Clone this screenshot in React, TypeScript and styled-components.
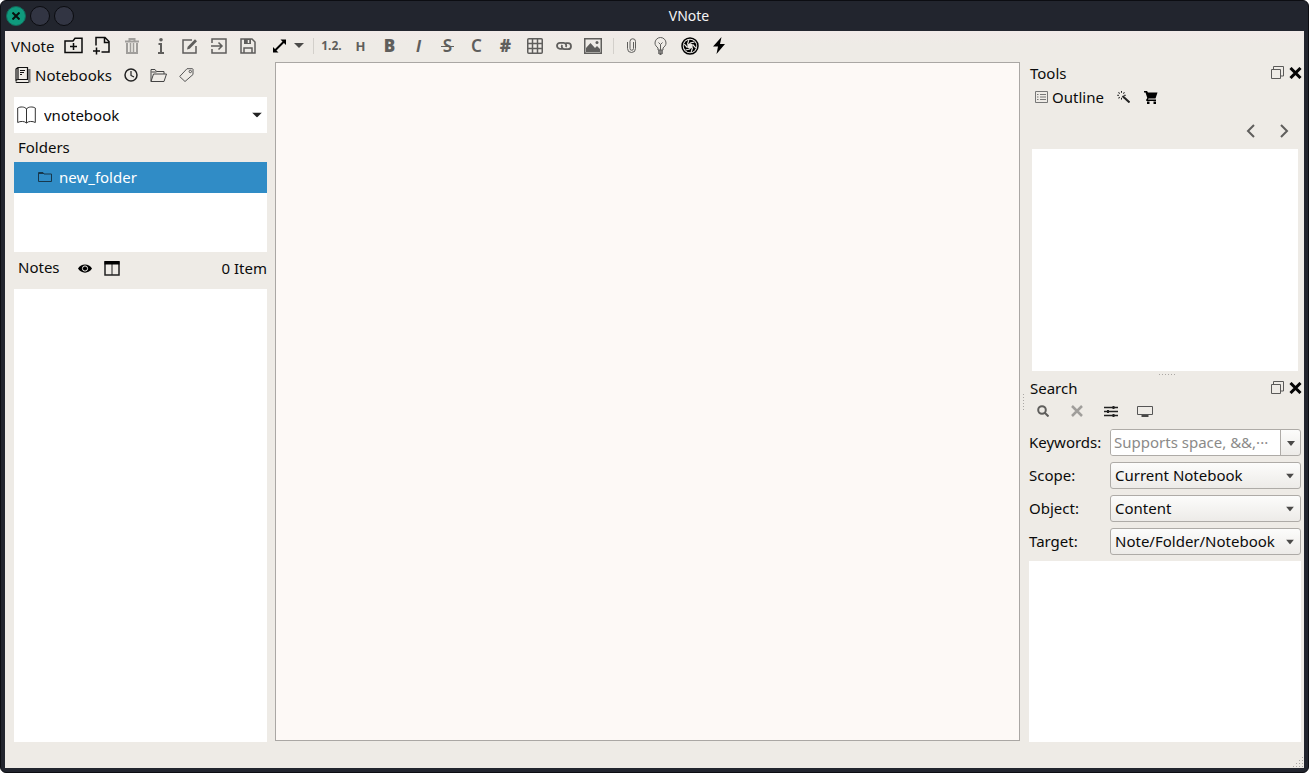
import React from "react";
import styled, { createGlobalStyle, css } from "styled-components";

const ink = "#0b0b0b";
const grey = "#5f5e5c";
const panel = "#eeebe6";

const GlobalStyle = createGlobalStyle`
  * { box-sizing: border-box; }
  body { margin: 0; background: #fff; }
  body, button, input, select {
    font-family: "Noto Sans", "Noto Sans CJK SC", sans-serif;
    font-size: 15px;
    line-height: 20px;
    color: ${ink};
  }
  button { border: 0; padding: 0; background: none; }
  svg { display: block; flex: none; }
`;

const Window = styled.div`
  display: flex;
  flex-direction: column;
  height: 100vh;
  min-height: 560px;
  padding: 0 4px 4px;
  border: 1px solid #0c0d12;
  border-radius: 6px;
  background: #22252e;
`;

const TitleBar = styled.header`
  display: flex;
  align-items: center;
  height: 30px;
  flex: none;
`;

const WindowButtons = styled.div`
  display: flex;
  gap: 4px;
  padding-left: 1px;
`;

const RoundButton = styled.button<{ $close?: boolean }>`
  display: grid;
  place-items: center;
  width: 20px;
  height: 20px;
  border-radius: 50%;
  border: 1px solid ${(p) => (p.$close ? "#12695a" : "#0b0c10")};
  background: ${(p) => (p.$close ? "#0f9a7d" : "#323543")};
`;

const WindowTitle = styled.h1`
  flex: 1;
  margin: 0;
  font-size: 14px;
  font-weight: 400;
  text-align: center;
  color: #f4f4f5;
`;

const Content = styled.div`
  display: flex;
  flex-direction: column;
  flex: 1;
  min-height: 0;
  background: ${panel};
`;

const Toolbar = styled.div`
  display: flex;
  align-items: center;
  height: 31px;
  flex: none;
  padding: 0 0 2px 6px;
  background: linear-gradient(#f1eae8, ${panel} 40%);
`;

const AppName = styled.span`
  width: 48px;
`;

const ToolButton = styled.button<{ $dim?: boolean; $dark?: boolean }>`
  display: grid;
  place-items: center;
  width: 29px;
  height: 28px;
  color: ${(p) => (p.$dim ? "#a09e9b" : p.$dark ? ink : grey)};
`;

const MenuToolButton = styled.button`
  display: flex;
  align-items: center;
  gap: 7px;
  width: 45px;
  height: 28px;
  padding-left: 10px;
`;

const Separator = styled.span`
  width: 1px;
  height: 16px;
  margin: 0 3px 0 6px;
  background: #d3d0cb;
`;

const Mark = styled.span<{ $size: number; $weight?: number; $italic?: boolean; $strike?: boolean }>`
  position: relative;
  font-family: ${(p) => (p.$italic ? '"Open Sans", sans-serif' : "inherit")};
  font-size: ${(p) => p.$size}px;
  font-weight: ${(p) => p.$weight ?? 700};
  font-style: ${(p) => (p.$italic ? "italic" : "normal")};
  ${(p) =>
    p.$strike &&
    css`
      &::after {
        content: "";
        position: absolute;
        left: -2px;
        right: -2px;
        top: 10px;
        height: 1px;
        background: currentColor;
      }
    `}
`;

const Main = styled.main`
  display: flex;
  flex: 1;
  min-height: 0;
`;

const SidePanel = styled.aside`
  display: flex;
  flex-direction: column;
  flex: none;
  width: 262px;
  padding-left: 9px;
`;

const TabRow = styled.nav<{ $height: number; $indent: number; $gap: number }>`
  display: flex;
  align-items: center;
  gap: ${(p) => p.$gap}px;
  height: ${(p) => p.$height}px;
  flex: none;
  padding-left: ${(p) => p.$indent}px;
`;

const Tab = styled.button`
  display: flex;
  align-items: center;
  gap: 4px;
`;

const NotebookBox = styled.div`
  position: relative;
  display: flex;
  align-items: center;
  height: 36px;
  flex: none;
  margin-top: 10px;
  padding-left: 3px;
  background: #fff;
`;

const NotebookSelect = styled.select`
  flex: 1;
  height: 36px;
  padding: 0 24px 0 8px;
  border: 0;
  appearance: none;
  background: transparent;
`;

const SelectArrow = styled.span<{ $right: number }>`
  position: absolute;
  right: ${(p) => p.$right}px;
  top: 50%;
  transform: translateY(-50%);
  pointer-events: none;
`;

const SectionTitle = styled.h2<{ $height: number }>`
  display: flex;
  align-items: center;
  height: ${(p) => p.$height}px;
  margin: 0;
  padding: 0 0 2px 4px;
  font-size: 15px;
  font-weight: 400;
`;

const Tree = styled.ul`
  flex: none;
  height: 90px;
  margin: 0;
  padding: 0;
  list-style: none;
  background: #fff;
`;

const TreeRow = styled.button`
  display: flex;
  align-items: center;
  gap: 7px;
  width: 100%;
  height: 31px;
  padding: 0 0 2px 24px;
  background: #308cc6;
  color: #fff;
`;

const NotesHeader = styled.div`
  display: flex;
  align-items: center;
  height: 32px;
  flex: none;
  margin-bottom: 5px;
`;

const NotesTools = styled.div`
  display: flex;
  flex: 1;
  gap: 12px;
  padding-left: 18px;
`;

const Pane = styled.section<{ $grow: number; $inset?: boolean }>`
  flex: ${(p) => p.$grow} 1 0;
  min-height: 0;
  margin: ${(p) => (p.$inset ? "0 6px 0 3px" : "0")};
  background: #fff;
`;

const Editor = styled.section`
  flex: 1;
  min-width: 0;
  margin: 0 0 1px 8px;
  border: 1px solid #aaa7a4;
  background: #fdf9f6;
`;

const VerticalGrip = styled.div`
  display: grid;
  place-items: center;
  width: 9px;
  padding-right: 2px;
  flex: none;
`;

const HorizontalGrip = styled.div`
  display: grid;
  place-items: center;
  height: 6px;
  flex: none;
`;

const DockColumn = styled.aside`
  display: flex;
  flex-direction: column;
  flex: none;
  width: 275px;
`;

const DockTitle = styled.div`
  display: flex;
  align-items: center;
  height: 23px;
  flex: none;
  padding: 0 2px 2px 1px;
`;

const DockName = styled.h2`
  flex: 1;
  margin: 0;
  font-size: 15px;
  font-weight: 400;
`;

const DockButtons = styled.div`
  display: flex;
  gap: 5px;
`;

const HistoryRow = styled.div`
  display: flex;
  justify-content: flex-end;
  align-items: center;
  height: 40px;
  flex: none;
  gap: 18px;
  padding: 4px 12px 0 0;
`;

const IconButton = styled.button<{ $width: number; $dim?: boolean }>`
  display: grid;
  place-items: center;
  width: ${(p) => p.$width}px;
  height: 20px;
  color: ${(p) => (p.$dim ? "#a09e9b" : grey)};
`;

const SearchTools = styled.div`
  display: flex;
  align-items: center;
  gap: 14px;
  height: 22px;
  flex: none;
  padding-left: 4px;
`;

const SearchForm = styled.form`
  display: grid;
  grid-template-columns: 81px 1fr;
  grid-auto-rows: 27px;
  row-gap: 6px;
  align-items: center;
  flex: none;
  padding: 7px 3px 6px 0;
`;

const FieldLabel = styled.label`
  padding-bottom: 2px;
`;

const Field = styled.div`
  position: relative;
  display: flex;
  height: 27px;
  border: 1px solid #aeaba7;
  border-radius: 3px;
  background: linear-gradient(#fcfcfb, #edebe8);
  overflow: hidden;
`;

const KeywordInput = styled.input`
  flex: 1;
  min-width: 0;
  padding: 0 0 2px 3px;
  border: 0;
  border-right: 1px solid #aeaba7;
  background: #fff;
  &::placeholder { color: #8b8a89; opacity: 1; }
`;

const FieldButton = styled.button`
  display: grid;
  place-items: center;
  width: 19px;
  padding-top: 1px;
`;

const FieldSelect = styled.select`
  flex: 1;
  min-width: 0;
  padding: 0 20px 2px 4px;
  border: 0;
  appearance: none;
  background: transparent;
`;

const SearchResults = styled.section`
  flex: 181 1 0;
  min-height: 0;
  margin-right: 3px;
  background: #fff;
`;

const StatusBar = styled.footer`
  display: flex;
  justify-content: flex-end;
  align-items: flex-end;
  height: 26px;
  flex: none;
  padding: 0 1px 1px 0;
`;

type IconProps = { w: number; h: number; sw?: number; color?: string; children: React.ReactNode };

function Icon({ w, h, sw = 1, color = "currentColor", children }: IconProps) {
  return (
    <svg width={w} height={h} viewBox={`0 0 ${w} ${h}`} fill="none" stroke={color} strokeWidth={sw} aria-hidden="true">
      {children}
    </svg>
  );
}

const Arrow = ({ w = 8, color = "#4b4a49" }: { w?: number; color?: string }) => (
  <Icon w={w} h={5}>
    <path d={`M0 0H${w}L${w / 2} 5Z`} fill={color} stroke="none" />
  </Icon>
);

const FloatIcon = () => (
  <Icon w={13} h={13} color="#5b5a59">
    <path d="M.5 3.5h9v9h-9zM2.5 3.5v-3h10v9.500h-3" />
  </Icon>
);

const CloseIcon = () => (
  <Icon w={13} h={12} sw={3} color="#050505">
    <path d="M1.5 1l10 10M11.5 1l-10 10" />
  </Icon>
);

const bladeAngles = [0, 60, 120, 180, 240, 300];
const rayAngles = [0, 45, 90, 135, 180, 225, 270, 315];

function MainToolbar() {
  return (
    <Toolbar role="toolbar" aria-label="Main">
      <AppName>VNote</AppName>
      <ToolButton $dark aria-label="New folder">
        <Icon w={19} h={17} sw={1.5}>
          <path d="M1 4h8l2-2.700h7V15.500H1zM9.500 6v7M6 9.500h7" />
        </Icon>
      </ToolButton>
      <ToolButton $dark aria-label="New note">
        <Icon w={19} h={19} sw={1.5}>
          <path d="M3 9.500V1.500h9l4 4v10.500H8.500M11.500 1.500v5h4.500M3.500 11.500v7M0 15h7" />
        </Icon>
      </ToolButton>
      <ToolButton $dim aria-label="Delete">
        <Icon w={14} h={16} sw={2}>
          <path d="M0 3.500h14M4.500 3V1h5v2M2 5v10h10V5" />
          <path d="M5.500 5v10M8.500 5v10" strokeWidth={1.500} />
        </Icon>
      </ToolButton>
      <ToolButton aria-label="Information">
        <Icon w={6} h={16} sw={2}>
          <circle cx="3" cy="1.8" r="1.8" fill="currentColor" stroke="none" />
          <path d="M.5 6H3v9M0 15h6" />
        </Icon>
      </ToolButton>
      <ToolButton aria-label="Edit">
        <Icon w={16} h={16} sw={1.5}>
          <path d="M10 2H1v13h13V8" />
          <path d="M5 11.500l.7-2.800L13 1.300l2 2-7.300 7.400z" fill="currentColor" stroke="none" />
        </Icon>
      </ToolButton>
      <ToolButton aria-label="Save and leave">
        <Icon w={16} h={16} sw={1.5}>
          <path d="M1 5V1h14v14H1v-4M0 8h10M7.500 4.500L11 8l-3.500 3.500" />
        </Icon>
      </ToolButton>
      <ToolButton aria-label="Save">
        <Icon w={16} h={16} sw={1.5}>
          <path d="M1 1h11l3 3v11H1zM4 15v-5h8v5" />
          <path d="M4 1h7v5H4z" fill="currentColor" stroke="none" />
          <path d="M8.500 2v3" stroke={panel} />
        </Icon>
      </ToolButton>
      <MenuToolButton aria-label="Expand">
        <Icon w={15} h={14} sw={2} color="#000">
          <path d="M3 11.500L12 2.500" />
          <path d="M8.500 0.500H14v5.500zM1 8v5.500h5.500z" fill="#000" stroke="none" />
        </Icon>
        <Arrow w={10} />
      </MenuToolButton>
      <Separator />
      <ToolButton aria-label="Heading sequence"><Mark $size={12}>1.2.</Mark></ToolButton>
      <ToolButton aria-label="Headings"><Mark $size={13}>H</Mark></ToolButton>
      <ToolButton aria-label="Bold"><Mark $size={17} $weight={900}>B</Mark></ToolButton>
      <ToolButton aria-label="Italic"><Mark $size={16} $italic>I</Mark></ToolButton>
      <ToolButton aria-label="Strikethrough"><Mark $size={17} $weight={600} $strike>S</Mark></ToolButton>
      <ToolButton aria-label="Inline code"><Mark $size={17} $weight={600}>C</Mark></ToolButton>
      <ToolButton aria-label="Code block"><Mark $size={17} $weight={900}>#</Mark></ToolButton>
      <ToolButton aria-label="Table">
        <Icon w={16} h={16} sw={1.5}>
          <rect x=".75" y=".75" width="14.500" height="14.500" rx="1" />
          <path d="M5.500 1v14M10.500 1v14M1 5.500h14M1 10.500h14" />
        </Icon>
      </ToolButton>
      <ToolButton aria-label="Link">
        <Icon w={16} h={10} sw={1.8}>
          <path d="M6.500 7.800H4a3 3 0 0 1 0-6h3.500a2.700 2.700 0 0 1 2.300 4.200" />
          <path d="M9.500 2.200H12a3 3 0 0 1 0 6H8.500a2.700 2.700 0 0 1-2.300-4.200" />
        </Icon>
      </ToolButton>
      <ToolButton aria-label="Image">
        <Icon w={18} h={16} sw={1.5}>
          <rect x=".75" y=".75" width="16.500" height="14.500" />
          <path d="M2 14V10l4.500-5 4.500 5 2-2L16 11v3z" fill="currentColor" stroke="none" />
          <circle cx="13" cy="4.500" r="1.500" fill="currentColor" stroke="none" />
        </Icon>
      </ToolButton>
      <Separator />
      <ToolButton aria-label="Attachments">
        <Icon w={9} h={15}>
          <path d="M6.500 4v6.500a1.500 1.500 0 0 1-3.500 0V3.500a2.700 2.700 0 0 1 5.500 0v7a4 4 0 0 1-8 0V4" />
        </Icon>
      </ToolButton>
      <ToolButton aria-label="Hints">
        <Icon w={13} h={18}>
          <path d="M4 13v-2C2.500 9.500 1 8.500 1 6a5.500 5.500 0 0 1 11 0c0 2.500-1.500 3.500-3 5v2zM4.500 5.500l2 2 2-2M6.500 7.500V13" />
          <path d="M4 14h5M4 16h5M5.500 17.500h2" strokeWidth={1.5} />
        </Icon>
      </ToolButton>
      <ToolButton $dark aria-label="Snapshot">
        <Icon w={18} h={18} color="#000">
          <circle cx="9" cy="9" r="8" strokeWidth={1.5} />
          <circle cx="9" cy="9" r="6.300" fill="#000" stroke="none" />
          <path d="M9 6l2.600 1.500v3L9 12l-2.600-1.500v-3z" fill={panel} stroke="none" />
          {bladeAngles.map((a) => (
            <path key={a} d="M9 6L13.500 5" stroke={panel} strokeWidth={1.2} transform={`rotate(${a} 9 9)`} />
          ))}
        </Icon>
      </ToolButton>
      <ToolButton $dark aria-label="Flash page">
        <Icon w={12} h={17}>
          <path d="M8.500 0L0 9.500h5L3.500 17 12 7H7z" fill="#000" stroke="none" />
        </Icon>
      </ToolButton>
    </Toolbar>
  );
}

function NotebookPanel() {
  return (
    <SidePanel>
      <TabRow $height={25} $indent={1} $gap={12}>
        <Tab>
          <Icon w={16} h={16} color="#111">
            <path d="M3 .5h9.500v12H3zM3 .5L1 2v12M1 13.500c0-1 1-1 2-1M1 14.500c0 .7.500 1 1.500 1H14" strokeWidth={1.2} />
            <path d="M13 2h2.500v13.500H13z" fill="#777" stroke="none" />
            <path d="M5 3.500h5M5 5.500h4M5 7.500h2" />
          </Icon>
          Notebooks
        </Tab>
        <Tab aria-label="History">
          <Icon w={14} h={14} sw={1.5} color="#222">
            <circle cx="7" cy="7" r="6" />
            <path d="M7 3v4.500l3 1.500" strokeWidth={1.2} />
          </Icon>
        </Tab>
        <Tab aria-label="Explorer">
          <Icon w={17} h={14} color="#444">
            <path d="M1 13.500V1.500h4l1.500 2H14V6M1 13.500L3.500 6h13L14 13.500zM1.500 4h5" />
          </Icon>
        </Tab>
        <Tab aria-label="Tags">
          <Icon w={15} h={14} color="#555">
            <path d="M.7 8.500L8 .7h5.500l.5.500V6.500l-8 7z" />
            <circle cx="11.300" cy="3.500" r="1.200" />
          </Icon>
        </Tab>
      </TabRow>
      <NotebookBox>
        <Icon w={19} h={18} color="#333">
          <path d="M9.500 3C8 .5 3 .5 .700 2v14.500c2.500-1.500 7-1.500 8.800.5 1.800-2 6.300-2 8.800-.5V2C16 .5 11 .5 9.500 3zV17" />
        </Icon>
        <NotebookSelect aria-label="Notebook">
          <option>vnotebook</option>
        </NotebookSelect>
        <SelectArrow $right={5}><Arrow w={10} color="#222" /></SelectArrow>
      </NotebookBox>
      <SectionTitle $height={29}>Folders</SectionTitle>
      <Tree>
        <li>
          <TreeRow>
            <Icon w={14} h={10} color="#17384d">
              <path d="M.5 9.500v-9h4.500l1 1.500h7.500v7.500z" />
              <path d="M1 1.500h5" />
            </Icon>
            new_folder
          </TreeRow>
        </li>
      </Tree>
      <NotesHeader>
        <SectionTitle $height={32}>Notes</SectionTitle>
        <NotesTools>
          <Tab aria-label="View">
            <Icon w={14} h={9}>
              <path d="M0 4.500C3-1 11-1 14 4.500 11 10 3 10 0 4.500z" fill="#000" stroke="none" />
              <circle cx="7" cy="4.500" r="2.600" stroke={panel} />
            </Icon>
          </Tab>
          <Tab aria-label="Split view">
            <Icon w={16} h={15} color="#222">
              <path d="M1 1h14v13H1z" strokeWidth={1.5} />
              <path d="M8 3v11" />
              <path d="M.5 0h15v3.500H.5z" fill="#000" stroke="none" />
            </Icon>
          </Tab>
        </NotesTools>
        <span>0 Item</span>
      </NotesHeader>
      <Pane $grow={1} aria-label="Note list" />
    </SidePanel>
  );
}

function ToolsDock() {
  return (
    <>
      <DockTitle>
        <DockName>Tools</DockName>
        <DockButtons>
          <Tab aria-label="Float tools"><FloatIcon /></Tab>
          <Tab aria-label="Close tools"><CloseIcon /></Tab>
        </DockButtons>
      </DockTitle>
      <TabRow $height={24} $indent={6} $gap={13}>
        <Tab>
          <Icon w={13} h={12} color="#777">
            <path d="M.5 .5h12v11H.5zM2 3.500h1.500M5 3.500h6M2 6h1.500M5 6h6M2 8.500h1.500M5 8.500h6" />
          </Icon>
          Outline
        </Tab>
        <Tab aria-label="Snippets">
          <Icon w={13} h={12} color="#222">
            <path d="M5.500 5l7 6.500" strokeWidth={2} />
            {rayAngles.map((a) => (
              <path key={a} d="M4.500 1.800V0" transform={`rotate(${a} 4.500 4.300)`} />
            ))}
          </Icon>
        </Tab>
        <Tab aria-label="Cart">
          <Icon w={16} h={13}>
            <path d="M1 0h3l1 1.500h9.500l-2 6H5.500L5 8.500h8V10H3.500L3 9l1.300-2L2.500 1.500H1zM4 10.500h2.500V13H4zM10.500 10.500H13V13h-2.500z" fill="#000" stroke="none" />
          </Icon>
        </Tab>
      </TabRow>
      <HistoryRow>
        <IconButton $width={16} aria-label="Previous">
          <Icon w={9} h={14} sw={2}><path d="M8 1L2 7l6 6" /></Icon>
        </IconButton>
        <IconButton $width={16} aria-label="Next">
          <Icon w={9} h={14} sw={2}><path d="M1 1l6 6-6 6" /></Icon>
        </IconButton>
      </HistoryRow>
      <Pane $grow={222} $inset aria-label="Outline" />
    </>
  );
}

const filters = [
  { id: "scope", label: "Scope:", value: "Current Notebook" },
  { id: "object", label: "Object:", value: "Content" },
  { id: "target", label: "Target:", value: "Note/Folder/Notebook" },
];

function SearchDock() {
  return (
    <>
      <DockTitle>
        <DockName>Search</DockName>
        <DockButtons>
          <Tab aria-label="Float search"><FloatIcon /></Tab>
          <Tab aria-label="Close search"><CloseIcon /></Tab>
        </DockButtons>
      </DockTitle>
      <SearchTools>
        <IconButton $width={20} aria-label="Search">
          <Icon w={12} h={12} sw={2}>
            <circle cx="5" cy="5" r="3.800" />
            <path d="M7.500 7.500l4 4" />
          </Icon>
        </IconButton>
        <IconButton $width={20} $dim aria-label="Clear">
          <Icon w={12} h={12} sw={2.5}><path d="M1 1l10 10M11 1L1 11" /></Icon>
        </IconButton>
        <IconButton $width={20} aria-label="Advanced settings">
          <Icon w={14} h={11} color="#222">
            <path d="M0 1.500h14M0 5.500h14M0 9.500h14" strokeWidth={1.3} />
            <path d="M9.500 0v3M4 4v3M9.500 8v3" strokeWidth={2} />
          </Icon>
        </IconButton>
        <IconButton $width={20} aria-label="Console">
          <Icon w={16} h={11} color="#555">
            <path d="M.5 .5h15v8H.5z" />
            <path d="M4.500 10h7" stroke="#111" strokeWidth={1.5} />
          </Icon>
        </IconButton>
      </SearchTools>
      <SearchForm>
        <FieldLabel htmlFor="keywords">Keywords:</FieldLabel>
        <Field>
          <KeywordInput id="keywords" placeholder="Supports space, &&,···" />
          <FieldButton type="button" aria-label="Recent keywords"><Arrow /></FieldButton>
        </Field>
        {filters.map((f) => (
          <React.Fragment key={f.id}>
            <FieldLabel htmlFor={f.id}>{f.label}</FieldLabel>
            <Field>
              <FieldSelect id={f.id}>
                <option>{f.value}</option>
              </FieldSelect>
              <SelectArrow $right={6}><Arrow /></SelectArrow>
            </Field>
          </React.Fragment>
        ))}
      </SearchForm>
      <SearchResults aria-label="Search results" />
    </>
  );
}

const gripSteps = [0, 1, 2, 3, 4, 5];
const cornerDots = [[9, 0], [6, 3], [9, 3], [3, 6], [6, 6], [9, 6], [0, 9], [3, 9], [6, 9], [9, 9]];

export default function App() {
  return (
    <>
      <GlobalStyle />
      <Window>
        <TitleBar>
          <WindowButtons>
            <RoundButton $close aria-label="Close window">
              <Icon w={8} h={8} sw={2} color="#08110f"><path d="M.5 .5l7 7M7.500 .5l-7 7" /></Icon>
            </RoundButton>
            <RoundButton aria-label="Minimize window" />
            <RoundButton aria-label="Maximize window" />
          </WindowButtons>
          <WindowTitle>VNote</WindowTitle>
        </TitleBar>
        <Content>
          <MainToolbar />
          <Main>
            <NotebookPanel />
            <Editor aria-label="Editor" />
            <VerticalGrip>
              <Icon w={1} h={16}>
                {gripSteps.map((i) => <rect key={i} y={i * 3} width="1" height="1" fill="#aaa7a4" stroke="none" />)}
              </Icon>
            </VerticalGrip>
            <DockColumn>
              <ToolsDock />
              <HorizontalGrip>
                <Icon w={16} h={1}>
                  {gripSteps.map((i) => <rect key={i} x={i * 3} width="1" height="1" fill="#aaa7a4" stroke="none" />)}
                </Icon>
              </HorizontalGrip>
              <SearchDock />
            </DockColumn>
          </Main>
          <StatusBar>
            <Icon w={10} h={10}>
              {cornerDots.map(([x, y]) => <rect key={`${x}-${y}`} x={x} y={y} width="1" height="1" fill="#aaa7a4" stroke="none" />)}
            </Icon>
          </StatusBar>
        </Content>
      </Window>
    </>
  );
}
